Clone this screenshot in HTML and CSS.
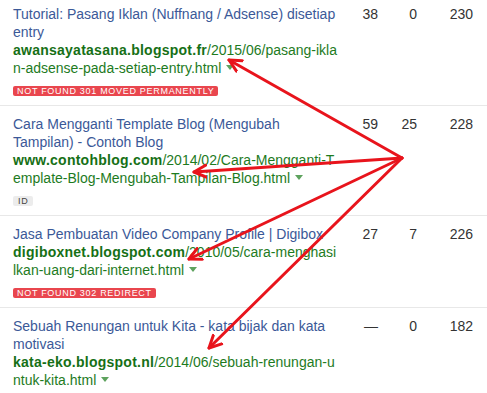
FILE: index.html
```html
<!DOCTYPE html>
<html>
<head>
  <meta charset="utf-8">
  <title>Backlinks</title>
  <link rel="stylesheet" href="styles.css">
</head>
<body>
  <div class="rows">
    <div class="row">
      <div class="page">
        <a class="title">Tutorial: Pasang Iklan (Nuffnang / Adsense) disetiap entry</a>
        <div class="url"><b>awansayatasana.blogspot.fr</b>/2015/06/pasang-iklan-adsense-pada-setiap-entry.html<span class="caret"></span></div>
        <div class="tags"><span class="tag bad">Not found 301 moved permanently</span></div>
      </div>
      <div class="num">38</div>
      <div class="num">0</div>
      <div class="num">230</div>
    </div>
    <div class="row">
      <div class="page">
        <a class="title">Cara Mengganti Template Blog (Mengubah Tampilan) - Contoh Blog</a>
        <div class="url"><b>www.contohblog.com</b>/2014/02/Cara-Mengganti-Template-Blog-Mengubah-Tampilan-Blog.html<span class="caret"></span></div>
        <div class="tags"><span class="tag lang">ID</span></div>
      </div>
      <div class="num">59</div>
      <div class="num">25</div>
      <div class="num">228</div>
    </div>
    <div class="row">
      <div class="page">
        <a class="title">Jasa Pembuatan Video Company Profile | Digibox</a>
        <div class="url"><b>digiboxnet.blogspot.com</b>/2010/05/cara-menghasilkan-uang-dari-internet.html<span class="caret"></span></div>
        <div class="tags"><span class="tag bad">Not found 302 redirect</span></div>
      </div>
      <div class="num">27</div>
      <div class="num">7</div>
      <div class="num">226</div>
    </div>
    <div class="row">
      <div class="page">
        <a class="title">Sebuah Renungan untuk Kita - kata bijak dan kata motivasi</a>
        <div class="url"><b>kata-eko.blogspot.nl</b>/2014/06/sebuah-renungan-untuk-kita.html<span class="caret"></span></div>
      </div>
      <div class="num">&mdash;</div>
      <div class="num">0</div>
      <div class="num">182</div>
    </div>
  </div>

  <!-- hand drawn arrows on top of the screenshot -->
  <svg class="arrows" width="487" height="393" viewBox="0 0 487 393">
    <defs>
      <marker id="head" markerUnits="userSpaceOnUse" markerWidth="20" markerHeight="20" refX="13" refY="8" orient="auto">
        <path d="M1,2 L13,8 L1,14" fill="none" stroke="#e8141c" stroke-width="3" stroke-linecap="round" stroke-linejoin="round"/>
      </marker>
    </defs>
    <g stroke="#e8141c" stroke-width="3" stroke-linecap="round" marker-end="url(#head)">
      <line x1="402" y1="158" x2="229" y2="60"/>
      <line x1="402" y1="158" x2="194" y2="172"/>
      <line x1="402" y1="158" x2="189" y2="259"/>
      <line x1="402" y1="158" x2="209" y2="348"/>
    </g>
  </svg>
</body>
</html>
```

FILE: styles.css
```css
body {
  margin: 0;
  background: #fff;
  font: 14px/18px "Liberation Sans", Arial, sans-serif;
  color: #333;
  overflow: hidden;
}
.rows {
  margin-top: -4px;
}
.row {
  display: grid;
  grid-template-columns: 325px 40px 39px 56px;
  padding: 9px 14px 11px 13px;
  border-bottom: 1px solid #e8e8e8;
}
.page {
  min-width: 0;
}
.title {
  display: block;
  color: #3b5998;
}
.url {
  color: #1e7b1e;
  word-break: break-all;
}
.url b {
  color: #167016;
  letter-spacing: 0.25px;
}
.caret {
  display: inline-block;
  margin-left: 5px;
  vertical-align: 3px;
  border-top: 5px solid #5ea35e;
  border-left: 4px solid transparent;
  border-right: 4px solid transparent;
}
.tags {
  margin-top: 7px;
  height: 10px;
  line-height: 10px;
}
.tag {
  display: inline-block;
  padding: 0 4px;
  border-radius: 2px;
  font-size: 9px;
  letter-spacing: 0.7px;
  text-transform: uppercase;
}
.bad {
  background: #e9464e;
  color: #fff;
}
.lang {
  padding: 0 5px;
  background: #ececec;
  color: #444;
}
.num {
  text-align: right;
}
.arrows {
  position: absolute;
  left: 0;
  top: 0;
}
```
